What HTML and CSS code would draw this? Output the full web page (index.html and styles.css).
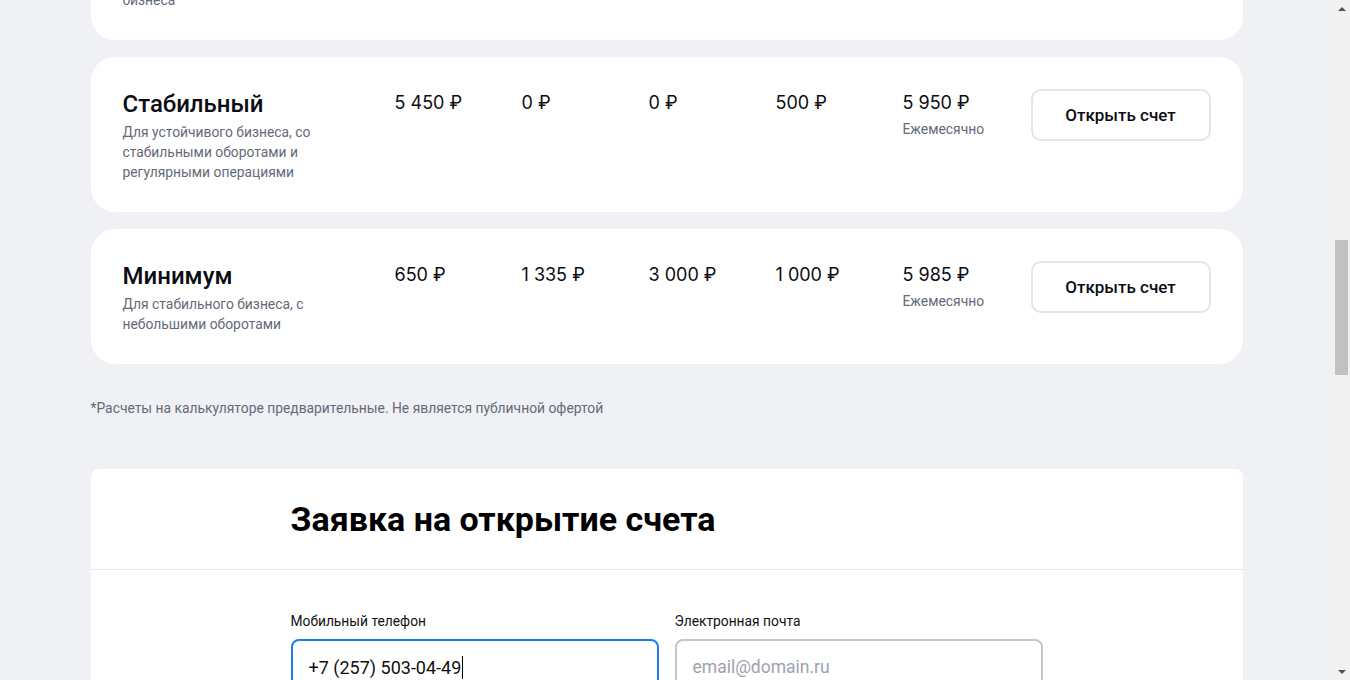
FILE: index.html
```html
<!DOCTYPE html>
<html lang="ru">
<head>
<meta charset="utf-8">
<title>Тарифы</title>
<link rel="stylesheet" href="styles.css">
</head>
<body>
<div class="window">
  <div class="viewport">
    <div class="page">
      <section class="tariffs">
        <article class="tariff">
          <div class="tariff__info">
            <h3 class="tariff__title">Простой</h3>
            <p class="tariff__desc">Для начинающего и небольшого<br>бизнеса</p>
          </div>
          <div class="tariff__val">490 ₽</div>
          <div class="tariff__val">0 ₽</div>
          <div class="tariff__val">0 ₽</div>
          <div class="tariff__val">0 ₽</div>
          <div class="tariff__val">490 ₽<span class="tariff__sub">Ежемесячно</span></div>
          <button class="btn">Открыть счет</button>
        </article>
        <article class="tariff">
          <div class="tariff__info">
            <h3 class="tariff__title">Стабильный</h3>
            <p class="tariff__desc">Для устойчивого бизнеса, со стабильными оборотами и регулярными операциями</p>
          </div>
          <div class="tariff__val">5 450 ₽</div>
          <div class="tariff__val">0 ₽</div>
          <div class="tariff__val">0 ₽</div>
          <div class="tariff__val">500 ₽</div>
          <div class="tariff__val">5 950 ₽<span class="tariff__sub">Ежемесячно</span></div>
          <button class="btn">Открыть счет</button>
        </article>
        <article class="tariff">
          <div class="tariff__info">
            <h3 class="tariff__title">Минимум</h3>
            <p class="tariff__desc">Для стабильного бизнеса, с небольшими оборотами</p>
          </div>
          <div class="tariff__val">650 ₽</div>
          <div class="tariff__val">1 335 ₽</div>
          <div class="tariff__val">3 000 ₽</div>
          <div class="tariff__val">1 000 ₽</div>
          <div class="tariff__val">5 985 ₽<span class="tariff__sub">Ежемесячно</span></div>
          <button class="btn">Открыть счет</button>
        </article>
      </section>
      <p class="note">*Расчеты на калькуляторе предварительные. Не является публичной офертой</p>
      <section class="apply">
        <div class="apply__head">
          <h2 class="apply__title">Заявка на открытие счета</h2>
        </div>
        <div class="apply__body">
          <div class="fields">
            <div class="field">
              <div class="field__label">Мобильный телефон</div>
              <div class="field__input field__input--focus"><span class="field__text">+7 (257) 503-04-49</span><span class="caret"></span></div>
            </div>
            <div class="field">
              <div class="field__label">Электронная почта</div>
              <div class="field__input"><span class="field__placeholder">email@domain.ru</span></div>
            </div>
          </div>
        </div>
      </section>
    </div>
  </div>
  <div class="scrollbar">
    <div class="sb-btn"><span class="sb-arrow sb-arrow--up"></span></div>
    <div class="sb-track"><div class="sb-thumb"></div></div>
    <div class="sb-btn"><span class="sb-arrow sb-arrow--down"></span></div>
  </div>
</div>
</body>
</html>
```
FILE: styles.css
```css
* { box-sizing: border-box; }
html, body { margin: 0; padding: 0; height: 100%; overflow: hidden; }
body {
  font-family: Roboto, "Liberation Sans", Arial, sans-serif;
  color: #0b0d12;
  background: #f0f1f5;
}
.window {
  display: flex;
  width: 1350px;
  height: 680px;
  overflow: hidden;
}
.viewport {
  flex: 1;
  overflow: hidden;
  background: #f0f1f5;
}
.page {
  width: 1152px;
  margin: -95px auto 0;
}
.tariffs {
  display: flex;
  flex-direction: column;
  gap: 17px;
}
.tariff {
  display: grid;
  grid-template-columns: 272px repeat(5, 127px) 1fr;
  align-items: start;
  background: #fff;
  border-radius: 24px;
  padding: 32px 32px 30px;
}
.tariff__title {
  margin: 0 0 3px;
  font-size: 24px;
  line-height: 30px;
  font-weight: 500;
  color: #0b0d12;
}
.tariff__desc {
  margin: 0;
  font-size: 13.85px;
  line-height: 20px;
  color: #646a78;
  max-width: 215px;
}
.tariff__val {
  font-family: Inter, Roboto, sans-serif;
  font-size: 18px;
  line-height: 28px;
  font-weight: 400;
  color: #0b0d12;
  display: flex;
  flex-direction: column;
}
.tariff__sub {
  font-family: Roboto, sans-serif;
  font-size: 13.85px;
  line-height: 18px;
  color: #646a78;
  margin-top: 3px;
}
.btn {
  justify-self: end;
  height: 52px;
  width: 180px;
  background: #fff;
  border: 2px solid #e3e5ea;
  border-radius: 10px;
  font-family: Roboto, sans-serif;
  font-size: 17px;
  font-weight: 500;
  color: #0b0d12;
  cursor: pointer;
}
.note {
  margin: 34px 0 51px;
  font-size: 13.85px;
  line-height: 20px;
  color: #646a78;
}
.apply {
  background: #fff;
  border-radius: 8px 8px 0 0;
}
.apply__head {
  padding: 30px 200px;
  border-bottom: 1px solid #e6e8ec;
}
.apply__title {
  margin: 0;
  font-size: 34px;
  line-height: 40px;
  font-weight: 700;
  color: #000;
}
.apply__body {
  padding: 41px 200px 40px;
}
.fields {
  display: grid;
  grid-template-columns: 1fr 1fr;
  gap: 16px;
}
.field__label {
  font-size: 13.8px;
  line-height: 20px;
  color: #111;
  margin-bottom: 8px;
}
.field__input {
  height: 56px;
  border: 2px solid #c3c6cd;
  border-radius: 8px;
  padding: 0 16px;
  display: flex;
  align-items: center;
  font-size: 18px;
}
.field__input--focus { border-color: #1a7df0; }
.field__text { color: #111; }
.field__placeholder { color: #9ea2ab; font-size: 17.5px; }
.caret {
  display: inline-block;
  width: 1px;
  height: 23px;
  background: #000;
  margin-left: 1px;
}
.scrollbar {
  width: 17px;
  background: #f1f1f1;
  display: flex;
  flex-direction: column;
}
.sb-btn {
  height: 17px;
  display: flex;
  align-items: center;
  justify-content: center;
}
.sb-track { flex: 1; padding: 0 2px; }
.sb-thumb {
  margin-top: 223px;
  height: 135px;
  background: #c1c1c1;
}
.sb-arrow { width: 0; height: 0; border-left: 4px solid transparent; border-right: 4px solid transparent; }
.sb-arrow--up { border-bottom: 4px solid #505050; }
.sb-arrow--down { border-top: 4px solid #505050; }
```
